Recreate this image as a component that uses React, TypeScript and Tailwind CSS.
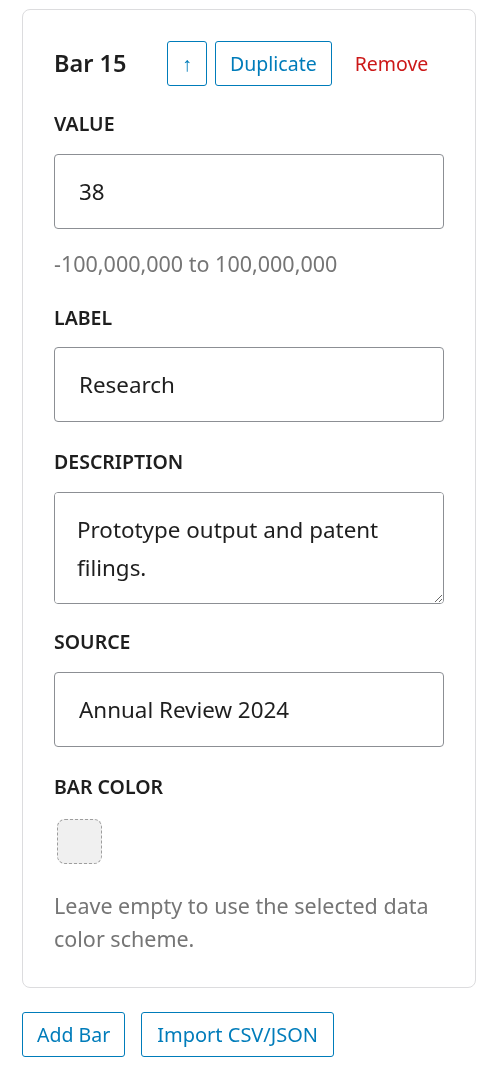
import { useState } from 'react';

const font = { fontFamily: '"Noto Sans", "Open Sans", sans-serif' };

const Label = ({ children, className = '' }: { children: string; className?: string }) => (
  <div className={`text-[19.5px] font-semibold uppercase leading-[24px] text-[#1e1e1e] ${className}`}>
    {children}
  </div>
);

export default function App() {
  const [value, setValue] = useState('38');
  const [label, setLabel] = useState('Research');
  const [description, setDescription] = useState('Prototype output and patent filings.');
  const [source, setSource] = useState('Annual Review 2024');

  const inputClass =
    'block w-full h-[75px] rounded-[4px] border border-[#8c8f94] bg-white px-[24px] text-[22.4px] text-[#1e1e1e] outline-none';

  return (
    <div className="pl-[22px] pt-[9px] text-[#1e1e1e]" style={font}>
      {/* Bar card */}
      <div className="w-[454px] rounded-[8px] border border-[#dcdcde] px-[31px] pt-[31px] pb-[32px]">
        <div className="flex h-[45px] items-center">
          <h3 className="w-[113px] text-[23.5px] font-semibold">Bar 15</h3>
          <button className="flex h-[45px] w-[40px] items-center justify-center rounded-[3px] border border-[#007cba] text-[20px] text-[#007cba]">
            ↑
          </button>
          <button className="ml-[8px] h-[45px] rounded-[3px] border border-[#007cba] px-[14px] text-[19.5px] text-[#007cba]">
            Duplicate
          </button>
          <button className="ml-[23px] text-[19.5px] text-[#cc1818]">Remove</button>
        </div>

        <Label className="mt-[26px] mb-[18px]">Value</Label>
        <input className={inputClass} value={value} onChange={(e) => setValue(e.target.value)} />
        <p className="mt-[21px] text-[21.5px] leading-[28px] text-[#757575]">-100,000,000 to 100,000,000</p>

        <Label className="mt-[28px] mb-[17px]">Label</Label>
        <input className={inputClass} value={label} onChange={(e) => setLabel(e.target.value)} />

        <Label className="mt-[28px] mb-[18px]">Description</Label>
        <textarea
          className="block h-[112px] w-full rounded-[4px] border border-[#8c8f94] bg-white px-[22px] py-[18px] text-[22.4px] leading-[38px] text-[#1e1e1e] outline-none"
          value={description}
          onChange={(e) => setDescription(e.target.value)}
        />

        <Label className="mt-[26px] mb-[18px]">Source</Label>
        <input className={inputClass} value={source} onChange={(e) => setSource(e.target.value)} />

        <Label className="mt-[28px] mb-[20px]">Bar Color</Label>
        <button className="ml-[3px] block h-[45px] w-[45px] rounded-[8px] border border-dashed border-[#9e9e9e] bg-[#f0f0f0]" />
        <p className="mt-[25px] text-[21.5px] leading-[33px] text-[#757575]">
          Leave empty to use the selected data color scheme.
        </p>
      </div>

      <div className="mt-[24px] flex gap-[16px]">
        <button className="h-[45px] rounded-[3px] border border-[#007cba] px-[14px] text-[19.5px] text-[#007cba]">
          Add Bar
        </button>
        <button className="h-[45px] rounded-[3px] border border-[#007cba] px-[15px] text-[20px] text-[#007cba]">
          Import CSV/JSON
        </button>
      </div>
    </div>
  );
}
